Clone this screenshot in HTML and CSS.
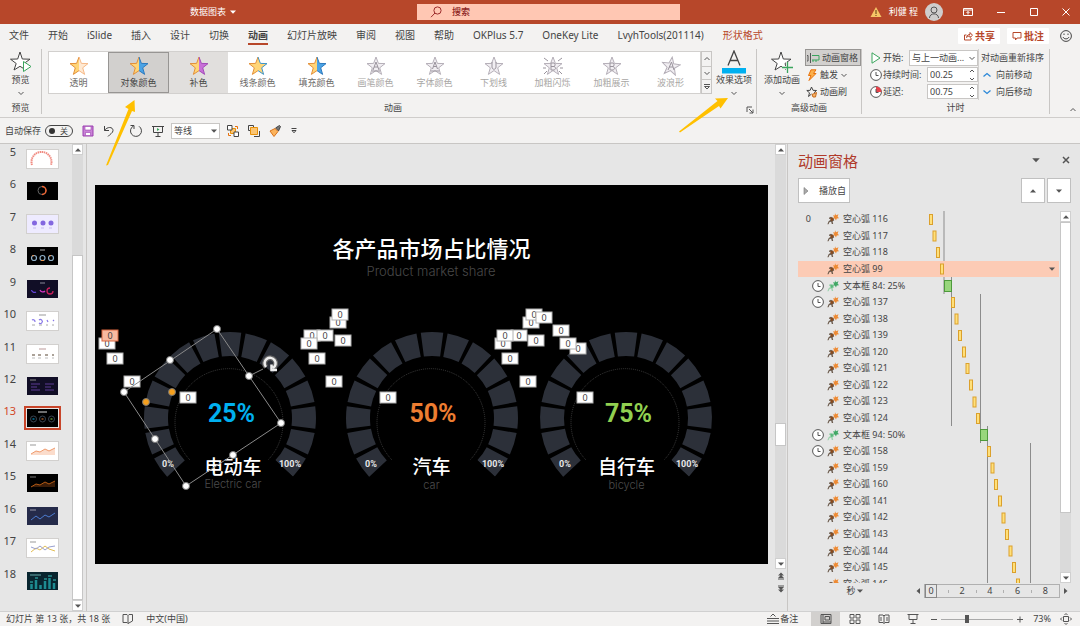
FILE: index.html
```html
<!DOCTYPE html>
<html lang="zh-CN">
<head>
<meta charset="utf-8">
<title>数据图表</title>
<link rel="stylesheet" href="styles.css">
</head>
<body>
<svg class="defs" aria-hidden="true">
  <symbol id="star" viewBox="0 0 20 20">
    <path class="star-l" d="M10 1 7.6 7.4 1 7.6 6.3 11.8 4.4 18.4 10 14.6Z"/>
    <path class="star-r" d="M10 1 12.4 7.4 19 7.6 13.7 11.8 15.6 18.4 10 14.6Z"/>
    <path class="star-edge" d="M10 1 7.6 7.4 1 7.6 6.3 11.8 4.4 18.4 10 14.6"/>
    <path class="star-edge-r" d="M10 1 12.4 7.4 19 7.6 13.7 11.8 15.6 18.4 10 14.6"/>
  </symbol>
  <symbol id="star-line" viewBox="0 0 20 20">
    <path d="M10 1 12.4 7.4 19 7.6 13.7 11.8 15.6 18.4 10 14.6 4.4 18.4 6.3 11.8 1 7.6 7.6 7.4Z"/>
  </symbol>
  <symbol id="chev" viewBox="0 0 8 8"><path d="M1.5 3 4 5.5 6.5 3" fill="none" stroke="#555"/></symbol>
  <symbol id="chev-up" viewBox="0 0 8 8"><path d="M1.5 5 4 2.5 6.5 5" fill="none" stroke="#555"/></symbol>
  <symbol id="tri" viewBox="0 0 8 8"><path d="M1 2.5H7L4 5.7Z" fill="#555"/></symbol>
  <symbol id="tri-up" viewBox="0 0 8 8"><path d="M1 5.5H7L4 2.3Z" fill="#555"/></symbol>
  <symbol id="clock" viewBox="0 0 12 12"><circle cx="6" cy="6" r="5.4" fill="#fff" stroke="#555"/><path d="M6 3V6.5H8.5" fill="none" stroke="#555"/></symbol>
  <symbol id="runner" viewBox="0 0 12 12">
    <path d="M8 .3 9 2.200 11.500 1.200 10.600 3.500 12 5.200 9.700 5.400 9 7.400 7.800 5.600 5.600 5.900 7 4 6 2.200 7.800 2.400Z" fill="var(--s1)"/>
    <path d="M2 4.8 4 3.8 6.5 5.2 7.2 7.2 5.6 8.4 6.2 11H4.8L4.2 8.8 2.6 9 1.5 11.2H.4L1.6 8.2 4 6.6 3.6 5.4 2 6Z" fill="var(--s2)"/>
    <path d="M3 5.5 5.5 4.6 6.2 7.2 4.2 8Z" fill="var(--s3)"/>
  </symbol>
  <symbol id="gauge" viewBox="0 0 180 180">
    <circle class="gauge-ring" cx="90" cy="90" r="74" pathLength="360" transform="rotate(137 90 90)"/>
    <circle class="gauge-cover" cx="90" cy="90" r="74" pathLength="360" transform="rotate(43 90 90)"/>
    <path class="gauge-dots" d="M50 132A54 54 0 1 1 128 132"/>
  </symbol>
</svg>

<header class="titlebar">
  <div class="doc-name">数据图表 <svg class="i8 light"><use href="#tri"/></svg></div>
  <label class="search">
    <svg class="i12" viewBox="0 0 12 12"><circle cx="7.5" cy="4.5" r="3.6"/><path d="M5 7 1 11.2"/></svg>
    <input type="text" placeholder="搜索" aria-label="搜索">
  </label>
  <div class="account">
    <svg class="i12" viewBox="0 0 12 12"><path d="M6 1 11.5 11H.5Z" fill="#f6c667"/><path d="M6 4V8M6 9V10" stroke="#5c3a10"/></svg>
    <span class="user">利健 程</span>
    <svg class="avatar" viewBox="0 0 18 18"><circle cx="9" cy="9" r="9" fill="#cfcdcc"/><circle cx="9" cy="7" r="3" fill="none" stroke="#555"/><path d="M4.5 15C4.5 9.500 13.500 9.500 13.500 15" fill="none" stroke="#555"/></svg>
    <button class="win" aria-label="功能区显示选项"><svg viewBox="0 0 12 12"><path d="M1.500 2.500H10.500V9.500H1.500ZM1.500 4H10.500M6 8.500V5.500M4.500 7 6 5.500 7.500 7"/></svg></button>
    <button class="win" aria-label="最小化"><svg viewBox="0 0 12 12"><path d="M2 6.500H10"/></svg></button>
    <button class="win" aria-label="最大化"><svg viewBox="0 0 12 12"><path d="M2.500 2.500H9.500V9.500H2.500Z"/></svg></button>
    <button class="win" aria-label="关闭"><svg viewBox="0 0 12 12"><path d="M2.500 2.500 9.500 9.500M9.500 2.500 2.500 9.500"/></svg></button>
  </div>
</header>

<nav class="tabs">
  <button>文件</button><button>开始</button><button>iSlide</button><button>插入</button><button>设计</button><button>切换</button><button class="current">动画</button><button>幻灯片放映</button><button>审阅</button><button>视图</button><button>帮助</button><button>OKPlus 5.7</button><button>OneKey Lite</button><button>LvyhTools(201114)</button><button class="context">形状格式</button>
  <div class="tab-actions">
    <button class="pill"><svg class="i10" viewBox="0 0 10 10"><path d="M3.500 4H1.500V9H8V7M3.500 6.500C4 4 5.500 3.500 7 3.500V1.500L9.500 4.300 7 6.500V5C5.500 5 4.500 5.500 3.500 6.500Z"/></svg>共享</button>
    <button class="pill"><svg class="i10" viewBox="0 0 10 10"><path d="M1 1.500H9V7H5L3.500 9V7H1Z"/></svg>批注</button>
    <svg class="i12 smile" viewBox="0 0 12 12"><circle cx="6" cy="6" r="5.400"/><path d="M4 3.500V5M8 3.500V5M3 7C4 9.500 8 9.500 9 7"/></svg>
  </div>
</nav>

<section class="ribbon">
  <div class="group g-preview">
    <button class="big">
      <svg class="i24" viewBox="0 0 24 24"><path d="M11 2 13.300 9 21 9.200 15 13.500 17 20 11 16.300 5 20 7.200 13.500 1.500 9.200 8.700 9Z" fill="#fff" stroke="#444"/><path d="M14.500 11.500V21.500L22 16.500Z" fill="#fff" stroke="#3ba55d"/></svg>
      <span>预览</span><svg class="i8"><use href="#chev"/></svg>
    </button>
    <div class="group-name">预览</div>
  </div>

  <div class="group g-anim">
    <div class="anim-body">
      <div class="gallery">
        <button class="fx f-fade"><svg><use href="#star"/></svg>透明</button>
        <button class="fx f-blue picked"><svg><use href="#star"/></svg>对象颜色</button>
        <button class="fx f-purple hover"><svg><use href="#star"/></svg>补色</button>
        <button class="fx f-line"><svg><use href="#star"/></svg>线条颜色</button>
        <button class="fx f-fill"><svg><use href="#star"/></svg>填充颜色</button>
        <button class="fx off"><svg viewBox="0 0 20 20"><use href="#star-line"/><path class="ltr" d="M7 14 10 6 13 14M8 11H12M6 15H14"/></svg>画笔颜色</button>
        <button class="fx off"><svg viewBox="0 0 20 20"><use href="#star-line"/><path class="ltr" d="M7.500 13 10 6 12.500 13M8.500 10.500H11.500M6 15H14"/></svg>字体颜色</button>
        <button class="fx off"><svg viewBox="0 0 20 20"><use href="#star-line"/><path class="ltr" d="M8 6V11C8 14 12 14 12 11V6"/></svg>下划线</button>
        <button class="fx off"><svg viewBox="0 0 20 20"><use href="#star-line"/><path class="ltr" d="M8 7V14H11C13 13.500 13 11 11 10.500H8M8 7H11C12.500 7.500 12.500 10 11 10.500M1 2 5 5M19 2 15 5M1 18 4 15M19 18 16 15M0 12H3M20 12H17"/></svg>加粗闪烁</button>
        <button class="fx off"><svg viewBox="0 0 20 20"><use href="#star-line"/><path class="ltr" d="M8 7V14H11C13 13.500 13 11 11 10.500H8M8 7H11C12.500 7.500 12.500 10 11 10.500"/></svg>加粗展示</button>
        <button class="fx off"><svg viewBox="0 0 20 20"><use href="#star-line" transform="rotate(8 10 10)"/><path class="ltr" d="M7 14 10.500 6 13 14M8 11H12"/></svg>波浪形</button>
      </div>
      <div class="gallery-nav">
        <button aria-label="上一行"><svg class="i8"><use href="#chev-up"/></svg></button>
        <button aria-label="下一行"><svg class="i8"><use href="#chev"/></svg></button>
        <button aria-label="其他"><svg class="i8" viewBox="0 0 8 8"><path d="M1 1.500H7" stroke="#555"/><path d="M1.500 3.500H6.500L4 6Z" fill="none" stroke="#555"/></svg></button>
      </div>
      <button class="big effect">
        <svg class="i24" viewBox="0 0 24 24"><path d="M6 15.500 12 1 18 15.500M8 10.500H16" fill="none" stroke="#444" stroke-width="1.300"/><path d="M0 18H24V23.500H0Z" fill="#00b0f0"/></svg>
        <span>效果选项</span><svg class="i8"><use href="#chev"/></svg>
      </button>
    </div>
    <div class="group-name">动画</div>
    <svg class="launcher" viewBox="0 0 8 8"><path d="M1 6V1H6M3 3 7 7M7 3.500V7H3.500" fill="none" stroke="#555"/></svg>
  </div>

  <div class="group g-adv">
    <div class="adv-body">
      <button class="big">
        <svg class="i24" viewBox="0 0 24 24"><path d="M11 2 13.300 9 21 9.200 15 13.500 17 20 11 16.300 5 20 7.200 13.500 1.500 9.200 8.700 9Z" fill="#fff" stroke="#444"/><path d="M12 17.500H23M17.500 12V23" stroke="#f3f2f1" stroke-width="3"/><path d="M12 17.500H23M17.500 12V23" stroke="#3ba55d" stroke-width="1.300"/></svg>
        <span>添加动画</span><svg class="i8"><use href="#chev"/></svg>
      </button>
      <div class="stack">
        <button class="line on"><svg class="i14" viewBox="0 0 14 12"><path d="M1 3.500H2V9H1M4.500 1V11" fill="none" stroke="#555"/><path d="M6 3.500H13V8H6M7 8V10M10 8V10" fill="none" stroke="#3ba55d"/></svg>动画窗格</button>
        <button class="line"><svg class="i12" viewBox="0 0 12 12"><path d="M5 .8H10L7.500 4.500H10L3 11.500 5 6.500H2.500Z" fill="#fbb04c" stroke="#e8710a"/></svg>触发<svg class="i8"><use href="#chev"/></svg></button>
        <button class="line"><svg class="i12" viewBox="0 0 12 12"><path d="M5.500 1 7 4.300 10.500 4.500 8 6.800M5.500 8 2.500 10.500 3.500 6.800 .8 4.500 4.200 4.300 5.500 1" fill="none" stroke="#444"/><path d="M6 8.500 10.500 6.500 9.500 11 7 11Z" fill="#f5b36a" stroke="#c96a1a"/></svg>动画刷</button>
      </div>
    </div>
    <div class="group-name">高级动画</div>
  </div>

  <div class="group g-time">
    <div class="time-body">
      <div class="stack timing">
        <div class="field"><svg class="i12" viewBox="0 0 12 12"><path d="M2 .8V11.200L10 6Z" fill="#fff" stroke="#3ba55d"/></svg><label for="start">开始:</label>
          <span class="combo"><select id="start"><option>与上一动画...</option></select><svg class="i8"><use href="#chev"/></svg></span></div>
        <div class="field"><svg class="i12"><use href="#clock"/></svg><label for="dur">持续时间:</label>
          <span class="spin"><input id="dur" type="text" value="00.25"><svg viewBox="0 0 8 14"><path d="M2 4 4 2 6 4M2 10 4 12 6 10"/></svg></span></div>
        <div class="field"><svg class="i12" viewBox="0 0 12 12"><circle cx="6" cy="6" r="5.400" fill="#fff" stroke="#555"/><path d="M6 6V.5A5.500 5.500 0 0 1 11.500 6Z" fill="#e8424b"/><path d="M6 3V6.500H8.500" fill="none" stroke="#555"/></svg><label for="delay">延迟:</label>
          <span class="spin"><input id="delay" type="text" value="00.75"><svg viewBox="0 0 8 14"><path d="M2 4 4 2 6 4M2 10 4 12 6 10"/></svg></span></div>
      </div>
      <div class="stack reorder">
        <div class="line">对动画重新排序</div>
        <button class="line"><svg class="i12" viewBox="0 0 12 12"><path d="M2.500 7.500 6 4.500 9.500 7.500" fill="none" stroke="#2b88d8" stroke-width="1.300"/></svg>向前移动</button>
        <button class="line"><svg class="i12" viewBox="0 0 12 12"><path d="M2.500 4.500 6 7.500 9.500 4.500" fill="none" stroke="#2b88d8" stroke-width="1.300"/></svg>向后移动</button>
      </div>
    </div>
    <div class="group-name">计时</div>
  </div>
  <button class="collapse" aria-label="折叠功能区"><svg class="i8"><use href="#chev-up"/></svg></button>
</section>

<section class="qat">
  <label class="autosave">自动保存<input type="checkbox"><span class="switch">关</span></label>
  <button aria-label="保存"><svg class="i12" viewBox="0 0 12 12"><path d="M1 1H11V11H1Z" fill="#c982d6" stroke="#9b3fb0"/><path d="M3 1.500H9V5H3ZM3.500 7.500H8.500V10.500H3.500Z" fill="#fff" stroke="#9b3fb0" stroke-width=".6"/></svg></button>
  <button aria-label="撤消"><svg class="i12" viewBox="0 0 12 12"><path d="M1.500 1V5.500H6M1.500 5.500C4 1.500 10 1.500 10 5.500C10 8 7 9 5 11.500"/></svg></button>
  <button class="redo" aria-label="重复"><svg class="i14" viewBox="0 0 14 14"><path d="M4.500 2A5.500 5.500 0 1 0 10 2.300M1.500 1.500H5V5"/></svg></button>
  <button aria-label="从头开始"><svg class="i12" viewBox="0 0 12 12"><path d="M0 1.500H12M1.500 1.500V7.500H10.500V1.500M6 7.500V11.500M3.500 11.500H8.500"/><path d="M5 3V6L7.500 4.500Z" fill="#3ba55d" stroke="none"/></svg></button>
  <span class="combo font"><select aria-label="字体"><option>等线</option></select><svg class="i8"><use href="#tri"/></svg></span>
  <button aria-label="对齐"><svg class="i12" viewBox="0 0 12 12"><path d="M8 1.500H10.500V4M1.500 8V10.500H4" stroke="#e8710a"/><path d="M3.500 3.500H8.500V8.500H3.500Z" fill="#fbc573" stroke="#e8910a"/><path d="M.5.500H5V5H.5ZM7 7H11.500V11.500H7Z" fill="#fff"/></svg></button>
  <button aria-label="上移一层"><svg class="i12" viewBox="0 0 12 12"><path d="M.5.500H5.500V3M.5.500V5.500H3M6 11.500H11.500V6"/><path d="M2.500 2.500H9.500V9.500H2.500Z" fill="#fbc573" stroke="#e8910a"/></svg></button>
  <button aria-label="格式刷"><svg class="i12" viewBox="0 0 12 12"><path d="M6.500 3 9.500 6 11.500 1.500 10.500.500Z" fill="#777"/><path d="M1 6 6 3.500 9 6.500 5 11.500Z" fill="#fbb35c" stroke="#d9731a"/></svg></button>
  <button aria-label="自定义"><svg class="i8" viewBox="0 0 8 8"><path d="M1.500 1.500H6.500M2 3.500H6L4 5.800Z"/></svg></button>
</section>

<main class="work">
  <aside class="slides">
    <ol class="thumbs">
      <li><span>5</span><svg class="w" viewBox="0 0 31 18"><path d="M5 15A10 10 0 1 1 24 15" fill="none" stroke="#f08a80" stroke-width="2" stroke-dasharray="1.500 .6"/></svg></li>
      <li><span>6</span><svg class="k" viewBox="0 0 31 18"><circle cx="15" cy="8.500" r="4" fill="none" stroke="#666"/><path d="M15 4.500A4 4 0 0 1 15 12.500" fill="none" stroke="#f26430" stroke-width="1.500"/></svg></li>
      <li><span>7</span><svg class="l" viewBox="0 0 31 18"><path d="M5 8a2.500 2.500 0 1 0 5 0 2.500 2.500 0 1 0-5 0M13.500 8a2.500 2.500 0 1 0 5 0 2.500 2.500 0 1 0-5 0M21.500 8a2.500 2.500 0 1 0 5 0 2.500 2.500 0 1 0-5 0" fill="#8367e0"/><path d="M6 13H9M14 13H17M22 13H25" stroke="#c5b9f0"/></svg></li>
      <li><span>8</span><svg class="k" viewBox="0 0 31 18"><g fill="none" stroke="#8fb0c8" stroke-width="1.200"><circle cx="7" cy="11" r="2.500"/><circle cx="15.500" cy="11" r="2.500"/><circle cx="24" cy="11" r="2.500"/></g><path d="M13 3H18" stroke="#aaa"/><path d="M5 9 7 8.500M22 9 24 8.500M14 13.500H17" stroke="#e8924c"/></svg></li>
      <li><span>9</span><svg class="n" viewBox="0 0 31 18"><g fill="none" stroke-width="1.300"><path d="M4.500 10A3 3 0 0 0 9 12" stroke="#6544d8"/><path d="M13 10A3 3 0 0 0 18 11" stroke="#d034c0"/><path d="M23 8A3 3 0 1 0 26 11" stroke="#c81e5a"/></g><path d="M13 3H18" stroke="#889"/></svg></li>
      <li><span>10</span><svg class="w" viewBox="0 0 31 18"><path d="M12 3H19" stroke="#999"/><g fill="none" stroke="#8877e8" stroke-width="1.200"><path d="M5 8A2 2 0 0 1 8 10M12 8A2 2 0 1 1 12 11M20 8 21 10M26 8 27 9"/></g><path d="M5 13H8M12 13H15M19 13H21M25 13H27" stroke="#aaa"/></svg></li>
      <li><span>11</span><svg class="w" viewBox="0 0 31 18"><path d="M12 4H19" stroke="#b99"/><path d="M5 10H8M11 10H14M18 10H21M25 10H27" stroke="#aba298" stroke-width="2"/><path d="M5 13H8M11 13H14M18 13H21M25 13H27" stroke="#bbb"/></svg></li>
      <li><span>12</span><svg class="n" viewBox="0 0 31 18"><path d="M3 3H9" stroke="#888"/><path d="M4 7H13M4 10H10M4 13H13M18 7H27M18 10H24M18 13H27" stroke="#5c3a94"/></svg></li>
      <li class="active"><span>13</span><svg class="k" viewBox="0 0 31 18"><path d="M11 3H20" stroke="#ddd"/><g fill="none" stroke="#3a4450"><circle cx="6.500" cy="10" r="3"/><circle cx="15.500" cy="10" r="3"/><circle cx="24.500" cy="10" r="3"/></g><path d="M5.500 10H7.500" stroke="#00b0f0"/><path d="M14.500 10H16.500" stroke="#ed7d31"/><path d="M23.500 10H25.500" stroke="#92d050"/></svg></li>
      <li><span>14</span><svg class="w" viewBox="0 0 31 18"><path d="M3 3H9" stroke="#999"/><path d="M4 12 9 9 13 10 18 7 22 9 28 6V13H4Z" fill="#fbdccb"/><path d="M4 12 9 9 13 10 18 7 22 9 28 6" fill="none" stroke="#f09a6c"/></svg></li>
      <li><span>15</span><svg class="k" viewBox="0 0 31 18"><path d="M3 3H9" stroke="#777"/><path d="M4 13 9 10 13 11 18 8 22 10 28 7V13Z" fill="#3a1c08"/><path d="M4 13 9 10 13 11 18 8 22 10 28 7" fill="none" stroke="#b45a14"/></svg></li>
      <li><span>16</span><svg class="b" viewBox="0 0 31 18"><path d="M3 3H9" stroke="#99a"/><path d="M4 13 9 9 13 12 18 8 22 10 28 6" fill="none" stroke="#4c7cd0"/></svg></li>
      <li><span>17</span><svg class="w" viewBox="0 0 31 18"><path d="M3 3H9" stroke="#999"/><path d="M4 13 9 9 13 11 18 7 22 10 28 12" fill="none" stroke="#e3bd52"/><path d="M4 8 9 10 13 7 18 11 22 8 28 7" fill="none" stroke="#99a0d0"/></svg></li>
      <li><span>18</span><svg class="t" viewBox="0 0 31 18"><path d="M3 3H14" stroke="#6aa"/><path d="M4.500 17V12M9 17V8M13.500 17V13M18 17V9M22.500 17V6M27 17V11" stroke="#1d8c92" stroke-width="2.500"/><path d="M3 10H6M8 6H11M17 7H20M21 4H25M26 8H29" stroke="#39c5c0"/></svg></li>
    </ol>
    <div class="vbar vbar-slides"><button aria-label="向上"><svg class="i8"><use href="#tri-up"/></svg></button><div class="track"><div class="thumb"></div></div><button aria-label="向下"><svg class="i8"><use href="#tri"/></svg></button></div>
  </aside>

  <section class="stage">
    <svg class="slide" viewBox="0 0 673 379">
      <text class="s-title" x="336.500" y="72">各产品市场占比情况</text>
      <text class="s-sub" x="336" y="91">Product market share</text>
      <use href="#gauge" x="45" y="143" width="180" height="180"/>
      <use href="#gauge" x="247" y="143" width="180" height="180"/>
      <use href="#gauge" x="441" y="143" width="180" height="180"/>
      <text class="pct blue" x="136.500" y="237">25%</text>
      <text class="pct orange" x="338" y="237">50%</text>
      <text class="pct green" x="533.500" y="237">75%</text>
      <g class="ends">
        <text x="73" y="282">0%</text><text x="195" y="282">100%</text>
        <text x="276" y="282">0%</text><text x="398" y="282">100%</text>
        <text x="470" y="282">0%</text><text x="592" y="282">100%</text>
      </g>
      <g class="kind"><text x="138" y="289">电动车</text><text x="336.500" y="289">汽车</text><text x="531.500" y="289">自行车</text></g>
      <g class="kind-en"><text x="138" y="303">Electric car</text><text x="336.500" y="304">car</text><text x="531.500" y="304">bicycle</text></g>

      <g class="tag">
      <g transform="translate(4 153)"><rect/><text x="8" y="9">0</text></g>
      <g class="sel" transform="translate(7 145)"><rect/><text x="8" y="9">0</text></g>
      <g transform="translate(12 168)"><rect/><text x="8" y="9">0</text></g>
      <g transform="translate(29 191)"><rect/><text x="8" y="9">0</text></g>
      <g transform="translate(85 207)"><rect/><text x="8" y="9">0</text></g>
      <g transform="translate(235 132)"><rect/><text x="8" y="9">0</text></g>
      <g transform="translate(237 124)"><rect/><text x="8" y="9">0</text></g>
      <g transform="translate(209 145)"><rect/><text x="8" y="9">0</text></g>
      <g transform="translate(222 145)"><rect/><text x="8" y="9">0</text></g>
      <g transform="translate(206 153)"><rect/><text x="8" y="9">0</text></g>
      <g transform="translate(240 150)"><rect/><text x="8" y="9">0</text></g>
      <g transform="translate(214 168)"><rect/><text x="8" y="9">0</text></g>
      <g transform="translate(231 191)"><rect/><text x="8" y="9">0</text></g>
      <g transform="translate(285 207)"><rect/><text x="8" y="9">0</text></g>
      <g transform="translate(428 132)"><rect/><text x="8" y="9">0</text></g>
      <g transform="translate(431 124)"><rect/><text x="8" y="9">0</text></g>
      <g transform="translate(441 127)"><rect/><text x="8" y="9">0</text></g>
      <g transform="translate(400 153)"><rect/><text x="8" y="9">0</text></g>
      <g transform="translate(416 145)"><rect/><text x="8" y="9">0</text></g>
      <g transform="translate(402 145)"><rect/><text x="8" y="9">0</text></g>
      <g transform="translate(433 150)"><rect/><text x="8" y="9">0</text></g>
      <g transform="translate(407 168)"><rect/><text x="8" y="9">0</text></g>
      <g transform="translate(425 191)"><rect/><text x="8" y="9">0</text></g>
      <g transform="translate(458 140)"><rect/><text x="8" y="9">0</text></g>
      <g transform="translate(475 158)"><rect/><text x="8" y="9">0</text></g>
      <g transform="translate(465 153)"><rect/><text x="8" y="9">0</text></g>
      <g transform="translate(482 207)"><rect/><text x="8" y="9">0</text></g>
      </g>

      <path class="frame" d="M122 144 29 207 91 301 186 238ZM154 191 168 184"/>
      <g class="knob"><circle cx="122" cy="144" r="3.500"/><circle cx="75" cy="175" r="3.500"/><circle cx="29" cy="207" r="3.500"/><circle cx="60" cy="254" r="3.500"/><circle cx="91" cy="301" r="3.500"/><circle cx="138" cy="270" r="3.500"/><circle cx="186" cy="238" r="3.500"/><circle cx="154" cy="191" r="3.500"/></g>
      <g class="knob adj"><circle cx="51" cy="217" r="3.500"/><circle cx="77" cy="207" r="3.500"/></g>
      <g fill="none"><path d="M171 182A5.500 5.500 0 1 1 178 183" stroke="#666" stroke-width="5"/><path d="M171 182A5.500 5.500 0 1 1 178 183M182 185H176.500V179.500" stroke="#eee" stroke-width="2.500"/></g>
    </svg>
  </section>
  <div class="vbar vbar-stage"><button aria-label="向上"><svg class="i8"><use href="#tri-up"/></svg></button><div class="track"><div class="thumb"></div></div><button aria-label="向下"><svg class="i8"><use href="#tri"/></svg></button>
    <button class="page" aria-label="上一张幻灯片"><svg class="i8" viewBox="0 0 8 8"><path d="M4 .5 7 3.500H1ZM4 3 7 6H1ZM1 6.500H7V7.500H1Z" fill="#555"/></svg></button>
    <button class="page" aria-label="下一张幻灯片"><svg class="i8" viewBox="0 0 8 8"><path d="M4 7.500 7 4.500H1ZM4 5 7 2H1ZM1 .5H7V1.500H1Z" fill="#555"/></svg></button>
  </div>

  <aside class="pane">
    <div class="pane-head"><h2>动画窗格</h2><button aria-label="选项"><svg class="i10"><use href="#tri"/></svg></button><button aria-label="关闭"><svg class="i10" viewBox="0 0 10 10"><path d="M2 2 8 8M8 2 2 8" stroke="#555" stroke-width="1.500"/></svg></button></div>
    <div class="pane-tools"><button class="play"><svg class="i8" viewBox="0 0 8 8"><path d="M2 .5V7.500L6 4Z" fill="#aaa" stroke="#777" stroke-width=".6"/></svg>播放自</button><button class="sq" aria-label="上移"><svg class="i8"><use href="#tri-up"/></svg></button><button class="sq" aria-label="下移"><svg class="i8"><use href="#tri"/></svg></button></div>
    <div class="anim-list">
      <div class="list-clip">
        <ul class="rows">
          <li><i>0</i><svg class="run"><use href="#runner"/></svg>空心弧 116</li>
          <li><i></i><svg class="run"><use href="#runner"/></svg>空心弧 117</li>
          <li><i></i><svg class="run"><use href="#runner"/></svg>空心弧 118</li>
          <li class="chosen"><i></i><svg class="run"><use href="#runner"/></svg>空心弧 99<svg class="i8 more"><use href="#tri"/></svg></li>
          <li><i><svg class="i12"><use href="#clock"/></svg></i><svg class="run text"><use href="#runner"/></svg>文本框 84: 25%</li>
          <li><i><svg class="i12"><use href="#clock"/></svg></i><svg class="run"><use href="#runner"/></svg>空心弧 137</li>
          <li><i></i><svg class="run"><use href="#runner"/></svg>空心弧 138</li>
          <li><i></i><svg class="run"><use href="#runner"/></svg>空心弧 139</li>
          <li><i></i><svg class="run"><use href="#runner"/></svg>空心弧 120</li>
          <li><i></i><svg class="run"><use href="#runner"/></svg>空心弧 121</li>
          <li><i></i><svg class="run"><use href="#runner"/></svg>空心弧 122</li>
          <li><i></i><svg class="run"><use href="#runner"/></svg>空心弧 123</li>
          <li><i></i><svg class="run"><use href="#runner"/></svg>空心弧 124</li>
          <li><i><svg class="i12"><use href="#clock"/></svg></i><svg class="run text"><use href="#runner"/></svg>文本框 94: 50%</li>
          <li><i><svg class="i12"><use href="#clock"/></svg></i><svg class="run"><use href="#runner"/></svg>空心弧 158</li>
          <li><i></i><svg class="run"><use href="#runner"/></svg>空心弧 159</li>
          <li><i></i><svg class="run"><use href="#runner"/></svg>空心弧 160</li>
          <li><i></i><svg class="run"><use href="#runner"/></svg>空心弧 141</li>
          <li><i></i><svg class="run"><use href="#runner"/></svg>空心弧 142</li>
          <li><i></i><svg class="run"><use href="#runner"/></svg>空心弧 143</li>
          <li><i></i><svg class="run"><use href="#runner"/></svg>空心弧 144</li>
          <li><i></i><svg class="run"><use href="#runner"/></svg>空心弧 145</li>
          <li><i></i><svg class="run"><use href="#runner"/></svg>空心弧 146</li>
        </ul>
        <svg class="chart" viewBox="0 0 136 381" preserveAspectRatio="none">
          <path class="marks" d="M21 0V50M21 66V83M28.500 66V215M57.500 83V232M64.500 215V381M107.500 232V381"/>
          <g class="bars">
            <rect x="6.500" y="3.500"/><rect x="10" y="20"/><rect x="13.500" y="36.500"/><rect x="17.500" y="53"/>
            <rect x="28.500" y="86.500"/><rect x="32" y="103"/><rect x="35.500" y="119.500"/><rect x="39.500" y="136"/><rect x="43" y="152.500"/><rect x="46.500" y="169"/><rect x="50" y="186"/><rect x="53.500" y="202.500"/>
            <rect x="64.500" y="235.500"/><rect x="68" y="252"/><rect x="71.500" y="268.500"/><rect x="75.500" y="285"/><rect x="79" y="302"/><rect x="82.500" y="318.500"/><rect x="86" y="335"/><rect x="89.500" y="351.500"/><rect x="93.500" y="368"/>
          </g>
          <g class="bars wide"><rect x="21.500" y="69.500"/><rect x="57.500" y="218.500"/></g>
        </svg>
      </div>
      <div class="vbar vbar-list"><button aria-label="向上"><svg class="i8"><use href="#tri-up"/></svg></button><div class="track"><div class="thumb"></div></div><button aria-label="向下"><svg class="i8"><use href="#tri"/></svg></button></div>
    </div>
    <div class="axis">
      <button class="unit">秒<svg class="i8"><use href="#tri"/></svg></button>
      <svg class="i8" viewBox="0 0 8 8"><path d="M6 1V7L2.500 4Z" fill="#555"/></svg>
      <div class="ruler"><b>0</b><s></s><span>2</span><s></s><span>4</span><s></s><span>6</span><s></s><span>8</span></div>
      <svg class="i8" viewBox="0 0 8 8"><path d="M2 1V7L5.500 4Z" fill="#555"/></svg>
    </div>
  </aside>
</main>

<footer class="status">
  <span class="count">幻灯片 第 13 张，共 18 张</span>
  <svg class="i12" viewBox="0 0 12 12"><path d="M1 1.500H5L6 2.500 7 1.500H10.500V8M1 1.500V9.500H5L6 10.500M6 2.500V10.500L10.500 8"/></svg>
  <span class="langname">中文(中国)</span>
  <button class="notes"><svg class="i12" viewBox="0 0 12 12"><path d="M0 5.500H12M0 8H12M0 10.500H12M3.500 3.500 6 1 8.500 3.500"/></svg>备注</button>
  <button class="view on" aria-label="普通视图"><svg class="i12" viewBox="0 0 12 12"><path d="M1 1.500H11V10.500H1ZM3 1.500V10.500M5 3.500H9.500V7H5ZM3 9H11"/></svg></button>
  <button class="view" aria-label="幻灯片浏览"><svg class="i12" viewBox="0 0 12 12"><path d="M1 1.500H5V5H1ZM7 1.500H11V5H7ZM1 7H5V10.500H1ZM7 7H11V10.500H7Z"/></svg></button>
  <button class="view" aria-label="阅读视图"><svg class="i12" viewBox="0 0 12 12"><path d="M1 2H5L6 3 7 2H11V9.500H7L6 10.500 5 9.500H1ZM6 3V10.500M3 4V8M9 4V8"/></svg></button>
  <button class="view" aria-label="幻灯片放映"><svg class="i12" viewBox="0 0 12 12"><path d="M.5 1.500H11.500M2 1.500V6.500H10V1.500M6 6.500V10.500M3.500 10.500H8.500"/></svg></button>
  <button class="step" aria-label="缩小"><svg class="i8" viewBox="0 0 8 8"><path d="M1 4.500H7"/></svg></button>
  <input class="zoom" type="range" min="10" max="190" value="73" aria-label="缩放">
  <button class="step" aria-label="放大"><svg class="i8" viewBox="0 0 8 8"><path d="M1 4.500H7M4 1.500V7.500"/></svg></button>
  <span class="zoom-val">73%</span>
  <button class="fit" aria-label="适应窗口"><svg class="i12" viewBox="0 0 12 12"><path d="M3.500 3.500H8.500V8.500H3.500ZM4.500 2 6 .5 7.500 2M4.500 10 6 11.500 7.500 10M2 4.500 .5 6 2 7.500M10 4.500 11.500 6 10 7.500"/></svg></button>
</footer>

<svg class="pointers" viewBox="0 0 1080 180" aria-hidden="true"><path d="M134.500 100 125 107 128.500 109 106 165.500 108 165 132 111 135 112ZM728 98 715 98.500 717.500 101 679 131.500 680 132.500 719 106 720.500 108.500Z"/></svg>
</body>
</html>
```
FILE: styles.css
```css
* { box-sizing: border-box; }
body {
  margin: 0;
  height: 100vh;
  display: flex;
  flex-direction: column;
  position: relative;
  overflow: hidden;
  background: #e6e6e6;
  color: #444;
  font: 9px/12px "Noto Sans", "Noto Sans CJK SC", sans-serif;
}
button, input, select { font: inherit; color: inherit; margin: 0; padding: 0; border: 0; background: none; }
button { display: flex; align-items: center; justify-content: center; white-space: nowrap; }
svg { display: block; flex: none; }
ol, ul { list-style: none; margin: 0; padding: 0; }
.defs { position: absolute; width: 0; height: 0; }
.i8 { width: 8px; height: 8px; }
.i10 { width: 10px; height: 10px; }
.i12 { width: 12px; height: 12px; }
.i14 { width: 14px; height: 14px; }
.i24 { width: 24px; height: 24px; }

/* title bar */
.titlebar {
  flex: none;
  display: grid;
  grid-template-columns: 417fr 263fr 400fr;
  align-items: center;
  height: 24px;
  background: #b7472a;
  color: #fff;
}
.doc-name { display: flex; align-items: center; justify-content: center; gap: 3px; padding-left: 10px; }
.light { filter: brightness(4); }
.search { display: flex; align-items: center; gap: 10px; height: 16px; padding-left: 13px; background: #ffc7b3; }
.search svg { fill: none; stroke: #9c2b2b; }
.search input { flex: 1; min-width: 0; outline: none; }
.search input::placeholder { color: #8c1f1f; opacity: 1; font-weight: 500; }
.account { display: flex; align-items: center; justify-content: flex-end; }
.user { margin: 0 7px; }
.avatar { width: 18px; height: 18px; margin-right: 8px; }
.win { width: 33px; height: 24px; }
.win:last-child { width: 30px; padding-left: 2px; }
.win svg { width: 12px; height: 12px; fill: none; stroke: #fff; }

/* tabs */
.tabs { flex: none; display: flex; align-items: center; gap: 19px; height: 23px; padding-left: 9px; background: #f3f2f1; font-size: 10px; }
.tabs > button { height: 19px; border-bottom: 2px solid transparent; }
.tabs > .current { font-weight: 700; border-color: #b7472a; }
.tabs > .context { color: #b7472a; }
.tab-actions { display: flex; align-items: center; gap: 7px; margin-left: auto; padding-right: 8px; }
.pill { gap: 2px; width: 42px; height: 16px; background: #fff; color: #b7472a; font-weight: 700; border-radius: 1px; }
.pill svg { fill: none; stroke: #b7472a; }
.smile { margin-left: 4px; fill: none; stroke: #444; }

/* ribbon */
.ribbon { flex: none; display: flex; height: 71px; padding: 2px 0 3px; background: #f3f2f1; border-bottom: 1px solid #cfcdcb; }
.group { position: relative; display: flex; flex-direction: column; justify-content: space-between; border-right: 1px solid #c8c6c4; }
.group-name { text-align: center; line-height: 13px; }
.g-preview { width: 42px; }
.g-anim { flex: 1; }
.g-anim .group-name { padding-right: 12px; }
.g-adv { width: 105px; }
.g-time { width: 188px; }
.anim-body, .adv-body, .time-body { display: flex; }
.big { flex-direction: column; justify-content: flex-start; width: 100%; padding-top: 1px; }
.big .i8 { margin-top: 3px; }
.anim-body { padding: 2px 0 0 6px; }
.gallery { flex: 1; display: flex; height: 43px; background: #fff; border: 1px solid #d2d0ce; }
.fx { flex: 1; flex-direction: column; justify-content: flex-start; padding-top: 4px; }
.fx svg { width: 20px; height: 20px; margin-bottom: 1px; }
.picked { background: #d2d0ce; border: 1px solid #979593; padding-top: 3px; }
.hover { background: #e1dfdd; }
.off { color: #a8a6a4; }
.star-l { fill: #ffd577; }
.star-r { fill: var(--in); }
.star-edge { fill: none; stroke: #e3903a; }
.star-edge-r { fill: none; stroke: var(--edge); }
.f-fade { --in: #ffe9d2; --edge: #f6b987; }
.f-fade, .f-line, .f-fill { color: #6b6967; }
.f-blue, .f-fill { --in: #4aa3e6; --edge: #2c79bd; }
.f-purple { --in: #c86fd8; --edge: #a24bb8; }
.f-line { --in: #ffd577; --edge: #3c94c9; }
.off svg { fill: #f1eef2; stroke: #b5afb8; }
.ltr { fill: none; stroke: #99939c; }
.gallery-nav { display: grid; grid-template-rows: 1fr 1fr 1fr; width: 11px; height: 43px; border: 1px solid #c8c6c4; }
.gallery-nav button + button { border-top: 1px solid #c8c6c4; }
.effect { width: 44px; }
.g-anim .big { padding-top: 0; margin-top: -1px; }
.launcher { position: absolute; right: 2px; bottom: 0; width: 8px; height: 8px; }
.adv-body .big { width: 46px; margin-left: 2px; }
.stack { display: grid; grid-template-rows: 17px 17px 17px; }
.line { display: flex; align-items: center; justify-content: flex-start; gap: 2px; white-space: nowrap; }
.adv-body .line { padding-left: 1px; }
.adv-body .line.on { width: 56px; background: #d2d0ce; border: 1px solid #979593; padding: 0; }
.timing { width: 117px; padding-left: 8px; border-right: 1px solid #d2d0ce; }
.field { display: flex; align-items: center; white-space: nowrap; }
.field label { margin: 0 2px 0 1px; }
.combo { position: relative; display: flex; align-items: center; background: #fff; border: 1px solid #c8c6c4; height: 16px; }
.combo select { width: 100%; height: 14px; appearance: none; outline: none; padding-left: 2px; }
.combo .i8 { position: absolute; right: 1px; pointer-events: none; }
.field .combo { width: 69px; margin-left: auto; }
.spin { display: flex; align-items: center; width: 51px; height: 15px; margin-left: auto; background: #fff; border: 1px solid #c8c6c4; }
.spin input { flex: 1; min-width: 0; padding-left: 2px; outline: none; }
.spin svg { width: 8px; height: 14px; margin-right: 1px; fill: none; stroke: #555; }
.reorder { padding-left: 2px; }
.reorder button { gap: 3px; }
.collapse { width: 30px; align-self: flex-end; justify-content: flex-end; padding-right: 3px; }

/* quick access */
.qat { flex: none; display: flex; align-items: center; gap: 9px; height: 26px; padding-left: 5px; background: #f3f2f1; border-bottom: 1px solid #c8c6c4; }
.qat button svg { fill: none; stroke: #444; }
.qat .redo { margin-left: 5px; }
.autosave { display: flex; align-items: center; gap: 4px; }
.autosave input { position: absolute; opacity: 0; }
.switch { position: relative; width: 28px; height: 12px; padding-right: 4px; border: 1px solid #444; border-radius: 6px; text-align: right; font-size: 8px; line-height: 10px; }
.switch::before { content: ""; position: absolute; left: 3px; top: 2px; width: 6px; height: 6px; border-radius: 3px; background: #333; }
.font { width: 49px; margin: 0 -2px; }

/* workspace */
.work { flex: 1; display: flex; min-height: 0; }
.slides { display: flex; width: 87px; border-right: 1px solid #c8c6c4; }
.thumbs { flex: 1; display: grid; grid-auto-rows: 1fr; padding-bottom: 13px; }
.thumbs li { display: flex; align-items: flex-start; gap: 11px; min-height: 0; padding-top: 6px; }
.thumbs span { width: 16px; margin-top: -4px; text-align: right; font-size: 11px; }
.thumbs svg { width: 31px; height: 18px; }
.thumbs .w { background: #fff; outline: 1px solid #d2d0ce; }
.k { background: #000; }
.l { background: #eeebff; outline: 1px solid #d2d0ce; }
.n { background: #110e26; }
.b { background: #252b4a; }
.t { background: #08252f; }
.active span { color: #d24726; }
.active svg { outline: 2px solid #c8452a; outline-offset: 1px; }
.vbar { display: flex; flex-direction: column; width: 11px; }
.vbar button { height: 11px; background: #fff; border: 1px solid #d0d0d0; }
.track { flex: 1; display: flex; flex-direction: column; background: #dadada; }
.thumb { background: #fff; border: 1px solid #c6c6c6; }
.vbar-slides { margin-right: 3px; }
.vbar-slides .track { padding-top: 100px; }
.vbar-slides .thumb, .vbar-list .thumb { flex: 1; }
.stage { flex: 1; min-width: 0; padding: 41px 7px 0 8px; }
.slide { width: 100%; height: auto; background: #000; }
.vbar-stage { padding-bottom: 16px; margin-right: 1px; }
.vbar-stage .thumb { height: 23px; margin-top: 268px; }
.vbar .page { height: 13px; background: none; border: 0; }
.slide text { text-anchor: middle; }
.s-title { font-size: 22px; font-weight: 500; fill: #fff; }
.s-sub { font: 300 13px Inter, sans-serif; fill: #484848; }
.gauge-ring { fill: none; stroke: #2c3039; stroke-width: 24; stroke-dasharray: 15 2.93; }
.gauge-cover { fill: none; stroke: #000; stroke-width: 26; stroke-dasharray: 94 266; }
.gauge-dots { fill: none; stroke: #3c3c3c; stroke-dasharray: 1 1; }
.pct { font: 700 25px Roboto, sans-serif; }
.blue { fill: #00b0f0; }
.orange { fill: #ed7d31; }
.green { fill: #92d050; }
.ends { font: 700 9px Roboto, sans-serif; fill: #e8e8e8; }
.kind { font-size: 19px; font-weight: 500; fill: #fff; }
.kind-en { font: 300 11px Inter, sans-serif; fill: #4c4c4c; }
.tag rect { width: 16px; height: 11px; fill: #fff; stroke: #b0b0b0; }
.tag text { font-size: 9px; fill: #444; }
.tag .sel rect { fill: #f8b9a0; stroke: #d9663f; }
.frame { fill: none; stroke: #8a8a8a; }
.knob { fill: #fff; stroke: #777; }
.adj { fill: #f5a01e; }

/* animation pane */
.pane { display: flex; flex-direction: column; width: 293px; border-left: 1px solid #c8c6c4; padding: 0 9px 12px 10px; }
.pane-head { display: flex; align-items: center; gap: 20px; height: 34px; }
.pane-head h2 { flex: 1; margin: 0; font-size: 15px; font-weight: 400; line-height: 20px; color: #b03a2a; }
.pane-head button { margin-top: -3px; }
.pane-tools { display: flex; gap: 2px; height: 25px; margin-bottom: 8px; }
.pane-tools button { background: #fff; border: 1px solid #c0c0c0; }
.play { gap: 9px; width: 52px; margin-right: auto; }
.sq { width: 24px; }
.anim-list { flex: 1; min-height: 0; display: flex; gap: 1px; }
.list-clip { flex: 1; display: grid; grid-template: 381px / 1fr; overflow: hidden; }
.rows { grid-area: 1 / 1; display: grid; grid-auto-rows: 1fr; }
.rows li { display: flex; align-items: center; gap: 4px; padding-right: 3px; }
.rows i { display: flex; justify-content: flex-end; width: 26px; font-style: normal; }
.rows li:first-child i { padding-right: 13px; }
.run { width: 12px; height: 12px; margin-left: -1px; --s1: #ee8a33; --s2: #6b5a4c; --s3: #8a4a1c; }
.text { --s1: #41a866; --s2: #9bd3ae; --s3: #5cb87c; }
.chosen { background: #fccbb5; }
.more { margin-left: auto; }
.chart { grid-area: 1 / 1; width: 136px; height: 381px; justify-self: end; }
.marks { fill: none; stroke: #8c8c8c; }
.bars { fill: #ffe07a; stroke: #dba02c; }
.bars rect { width: 3px; height: 10px; }
.wide { fill: #98d67c; stroke: #4e9a3c; }
.wide rect { width: 7px; height: 11px; }
.vbar-list .track { padding-bottom: 59px; }
.axis { display: flex; align-items: center; gap: 2px; height: 16px; padding-right: 1px; }
.unit { width: 114px; }
.ruler { flex: 1; display: flex; align-items: center; justify-content: space-between; height: 14px; padding-right: 11px; border: 1px solid #b0b0b0; }
.ruler b { width: 12px; height: 14px; text-align: center; font-weight: 400; border: 1px solid #888; }
.ruler s { width: 1px; height: 3px; background: #b0b0b0; }

/* status bar */
.status { flex: none; display: flex; align-items: center; height: 15px; padding-left: 6px; background: #f3f2f1; border-top: 1px solid #d0d0d0; white-space: nowrap; }
.status svg { fill: none; stroke: #555; }
.count { margin-right: 12px; }
.langname { margin-left: 12px; }
.notes { gap: 1px; margin-left: auto; margin-right: 13px; }
.view { width: 29px; height: 14px; }
.view.on { background: #d2d0ce; }
.step { width: 14px; }
.zoom { width: 72px; height: 12px; appearance: none; background: linear-gradient(#aaa, #aaa) center / 100% 1px no-repeat; }
.zoom::-webkit-slider-thumb { appearance: none; width: 4px; height: 8px; background: #555; }
.zoom-val { margin: 0 9px 0 6px; }
.fit { margin-right: 8px; }
.pointers { position: absolute; left: 0; top: 0; width: 1080px; height: 180px; fill: #ffc000; pointer-events: none; }
```
